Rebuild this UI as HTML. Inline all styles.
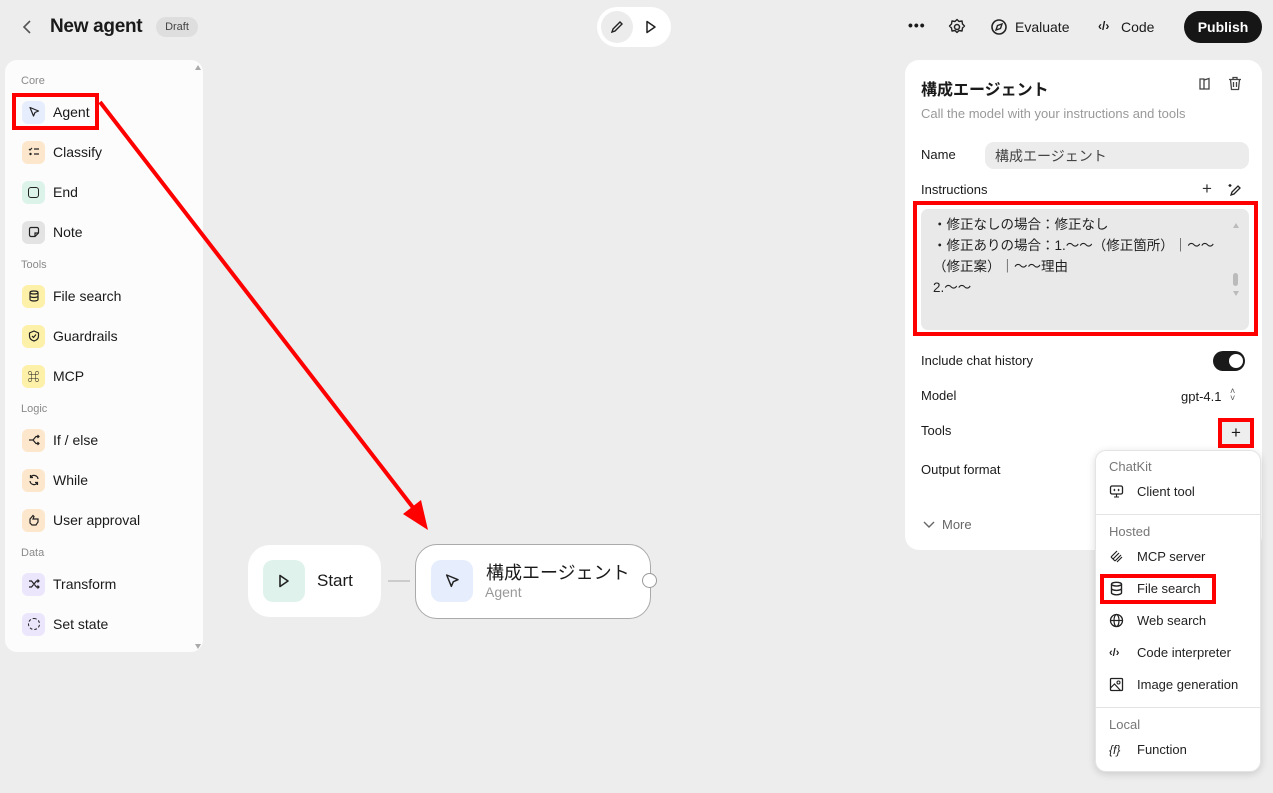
<!DOCTYPE html><html><head><meta charset="utf-8"><style>
*{box-sizing:border-box;margin:0;padding:0}
body{width:1273px;height:793px;background:#ededed;font-family:"Liberation Sans","Noto Sans CJK JP",sans-serif;color:#1a1a1a;position:relative;overflow:hidden}
.a{position:absolute}
.sec{position:absolute;left:21px;font-size:11px;color:#8a8a8a}
.it{position:absolute;left:22px;height:22px;display:flex;align-items:center;font-size:14px}
.ic{width:23px;height:23px;border-radius:6px;margin-right:8px;display:flex;align-items:center;justify-content:center}
.lbl{position:absolute;left:921px;font-size:14px}
.dd{position:absolute;left:1109px;font-size:13px;color:#222;display:flex;align-items:center}
.dd svg{margin-right:13px}
.dh{position:absolute;left:1109px;font-size:13px;color:#777}
svg{display:block}
</style></head><body>
<svg class="a" style="left:20px;top:19px" width="14" height="16" viewBox="0 0 14 16"><path d="M10 2L4 8l6 6" fill="none" stroke="#555" stroke-width="1.6"/></svg>
<div class="a" style="left:50px;top:16px;font-size:19px;font-weight:bold;letter-spacing:-0.3px">New agent</div>
<div class="a" style="left:156px;top:17px;width:42px;height:20px;border-radius:10px;background:#dedede;font-size:11px;color:#444;text-align:center;line-height:20px">Draft</div>
<div class="a" style="left:597px;top:7px;width:74px;height:40px;border-radius:20px;background:#fff"></div>
<div class="a" style="left:601px;top:11px;width:32px;height:32px;border-radius:16px;background:#ececec"></div>
<svg class="a" style="left:609px;top:19px" width="16" height="16" viewBox="0 0 16 16"><path d="M3 13l1-3 7-7 2 2-7 7z" fill="none" stroke="#222" stroke-width="1.4"/></svg>
<svg class="a" style="left:644px;top:19px" width="14" height="16" viewBox="0 0 14 16"><path d="M3 2.5v11l8-5.5z" fill="none" stroke="#222" stroke-width="1.5" stroke-linejoin="round"/></svg>
<div class="a" style="left:908px;top:17px;font-size:14px;font-weight:bold;letter-spacing:1px">•••</div>
<svg class="a" style="left:948px;top:18px" width="18" height="18" viewBox="0 0 18 18"><circle cx="9" cy="9" r="2.5" fill="none" stroke="#222" stroke-width="1.5"/><path d="M9 1.5l2 2 3-.5.5 3 2 2-2 2-.5 3-3-.5-2 2-2-2-3 .5-.5-3-2-2 2-2 .5-3 3 .5z" fill="none" stroke="#222" stroke-width="1.4" stroke-linejoin="round"/></svg>
<svg class="a" style="left:990px;top:18px" width="18" height="18" viewBox="0 0 18 18"><circle cx="9" cy="9" r="7" fill="none" stroke="#222" stroke-width="1.6"/><path d="M12 6l-1.5 4.5L6 12l1.5-4.5z" fill="none" stroke="#222" stroke-width="1.4"/></svg>
<div class="a" style="left:1015px;top:19px;font-size:14px">Evaluate</div>
<div class="a" style="left:1098px;top:19px;font-size:12px;font-weight:bold">‹/›</div>
<div class="a" style="left:1121px;top:19px;font-size:14px">Code</div>
<div class="a" style="left:1184px;top:11px;width:78px;height:32px;border-radius:16px;background:#161616;color:#fff;font-size:14px;font-weight:bold;text-align:center;line-height:32px">Publish</div>

<div class="a" style="left:5px;top:60px;width:198px;height:592px;border-radius:12px;background:#fcfcfc"></div>
<div class="a" style="left:195px;top:62px;width:0;height:0;border:3.5px solid transparent;border-bottom:5px solid #aaa"></div>
<div class="a" style="left:195px;top:644px;width:0;height:0;border:3.5px solid transparent;border-top:5px solid #aaa"></div>
<div class="sec" style="top:75px">Core</div>
<div class="sec" style="top:259px">Tools</div>
<div class="sec" style="top:403px">Logic</div>
<div class="sec" style="top:547px">Data</div>
<div class="it" style="top:101px"><div class="ic" style="background:#e6edfd"><svg width="12" height="12" viewBox="0 0 12 12"><path d="M2 1.5l8.5 3.5-3.5 1.5-1.5 3.5z" fill="none" stroke="#222" stroke-width="1.2" stroke-linejoin="round"/></svg></div>Agent</div>
<div class="it" style="top:141px"><div class="ic" style="background:#fde7cc"><svg width="12" height="12" viewBox="0 0 12 12"><path d="M1 3l1 1 2-2M6 3h5M6 8h5" stroke="#222" stroke-width="1.2" fill="none"/><circle cx="2.5" cy="8" r="1.2" fill="#222"/></svg></div>Classify</div>
<div class="it" style="top:181px"><div class="ic" style="background:#dcf3ea"><div style="width:11px;height:11px;border:1.4px solid #222;border-radius:3px"></div></div>End</div>
<div class="it" style="top:221px"><div class="ic" style="background:#e3e3e3"><svg width="12" height="12" viewBox="0 0 12 12"><path d="M1.5 3a1.5 1.5 0 011.5-1.5h6A1.5 1.5 0 0110.5 3v4L7 10.5H3A1.5 1.5 0 011.5 9zM7 10.5V7h3.5" fill="none" stroke="#222" stroke-width="1.2"/></svg></div>Note</div>
<div class="it" style="top:285px"><div class="ic" style="background:#fdf0a8"><svg width="12" height="12" viewBox="0 0 12 12"><ellipse cx="6" cy="2.5" rx="4" ry="1.5" fill="none" stroke="#222" stroke-width="1.2"/><path d="M2 2.5v7c0 .8 1.8 1.5 4 1.5s4-.7 4-1.5v-7M2 6c0 .8 1.8 1.5 4 1.5S10 6.8 10 6" fill="none" stroke="#222" stroke-width="1.2"/></svg></div>File search</div>
<div class="it" style="top:325px"><div class="ic" style="background:#fdf0a8"><svg width="12" height="12" viewBox="0 0 12 12"><path d="M6 1l4.5 2v3c0 2.5-2 4.3-4.5 5-2.5-.7-4.5-2.5-4.5-5V3z" fill="none" stroke="#222" stroke-width="1.2"/><path d="M4 6l1.5 1.5L8 4.5" fill="none" stroke="#222" stroke-width="1.2"/></svg></div>Guardrails</div>
<div class="it" style="top:365px"><div class="ic" style="background:#fdf0a8"><span style="font-size:12px">⌘</span></div>MCP</div>
<div class="it" style="top:429px"><div class="ic" style="background:#fde7cc"><svg width="12" height="12" viewBox="0 0 12 12"><path d="M1 6h4l3-3.5h3M5 6l3 3.5h3M9.5 1l1.5 1.5L9.5 4M9.5 8l1.5 1.5L9.5 11" fill="none" stroke="#222" stroke-width="1.2"/></svg></div>If / else</div>
<div class="it" style="top:469px"><div class="ic" style="background:#fde7cc"><svg width="12" height="12" viewBox="0 0 12 12"><path d="M10 5a4 4 0 00-7.5-1.5M2 7a4 4 0 007.5 1.5M2.5 1v2.5H5M9.5 11V8.5H7" fill="none" stroke="#222" stroke-width="1.2"/></svg></div>While</div>
<div class="it" style="top:509px"><div class="ic" style="background:#fde7cc"><svg width="12" height="12" viewBox="0 0 12 12"><path d="M2 5l3-3.5 1 1L5 5h5v3l-2 3H4L2 9z" fill="none" stroke="#222" stroke-width="1.2"/></svg></div>User approval</div>
<div class="it" style="top:573px"><div class="ic" style="background:#ece6fd"><svg width="12" height="12" viewBox="0 0 12 12"><path d="M1 3h2.5l5 6H11M1 9h2.5l5-6H11M9.5 1.5L11 3 9.5 4.5M9.5 7.5L11 9l-1.5 1.5" fill="none" stroke="#222" stroke-width="1.2"/></svg></div>Transform</div>
<div class="it" style="top:613px"><div class="ic" style="background:#ece6fd"><div style="width:12px;height:12px;border:1.4px dashed #222;border-radius:50%"></div></div>Set state</div>
<div class="a" style="left:12px;top:93px;width:87px;height:37px;border:4px solid #f00"></div>

<div class="a" style="left:248px;top:545px;width:133px;height:72px;border-radius:22px;background:#fff"></div>
<div class="a" style="left:263px;top:560px;width:42px;height:42px;border-radius:10px;background:#dff3ec"></div>
<svg class="a" style="left:277px;top:573px" width="14" height="16" viewBox="0 0 14 16"><path d="M3 2.5v11l8-5.5z" fill="none" stroke="#222" stroke-width="1.6" stroke-linejoin="round"/></svg>
<div class="a" style="left:317px;top:571px;font-size:17px">Start</div>
<div class="a" style="left:388px;top:580px;width:22px;height:2px;background:#ccc"></div>
<div class="a" style="left:415px;top:544px;width:236px;height:75px;border-radius:22px;background:#fff;border:1.5px solid #aaa"></div>
<div class="a" style="left:431px;top:560px;width:42px;height:42px;border-radius:10px;background:#e6edfd"></div>
<svg class="a" style="left:444px;top:573px" width="16" height="16" viewBox="0 0 12 12"><path d="M2 1.5l8.5 3.5-3.5 1.5-1.5 3.5z" fill="none" stroke="#222" stroke-width="1.1" stroke-linejoin="round"/></svg>
<div class="a" style="left:486px;top:559px;font-size:18px">構成エージェント</div>
<div class="a" style="left:485px;top:584px;font-size:14px;color:#999">Agent</div>
<div class="a" style="left:642px;top:573px;width:15px;height:15px;border-radius:50%;background:#fff;border:1.5px solid #999"></div>

<svg class="a" style="left:0;top:0" width="1273" height="793"><line x1="100" y1="102" x2="418" y2="514" stroke="#f00" stroke-width="4"/><path d="M428 530L403 514l18-14z" fill="#f00"/></svg>

<div class="a" style="left:905px;top:60px;width:357px;height:490px;border-radius:14px;background:#fff"></div>
<div class="a" style="left:921px;top:76px;font-size:16px;font-weight:bold">構成エージェント</div>
<svg class="a" style="left:1198px;top:77px" width="14" height="14" viewBox="0 0 14 14"><path d="M2 2h4v10H2zM6 3l5-1.5V12L6 12" fill="none" stroke="#444" stroke-width="1.3"/></svg>
<svg class="a" style="left:1228px;top:76px" width="14" height="15" viewBox="0 0 14 15"><path d="M1 3.5h12M5 3.5V1.5h4v2M2.5 3.5l1 10h7l1-10M5.5 6v5M8.5 6v5" fill="none" stroke="#444" stroke-width="1.3"/></svg>
<div class="a" style="left:921px;top:106px;font-size:13px;color:#999">Call the model with your instructions and tools</div>
<div class="lbl" style="top:147px;font-size:13px">Name</div>
<div class="a" style="left:985px;top:142px;width:264px;height:27px;border-radius:9px;background:#ececec;font-size:14px;color:#444;padding:6px 10px;line-height:16px">構成エージェント</div>
<div class="lbl" style="top:182px;font-size:13px">Instructions</div>
<div class="a" style="left:1202px;top:179px;font-size:17px;color:#333">+</div>
<svg class="a" style="left:1228px;top:183px" width="14" height="14" viewBox="0 0 14 14"><path d="M3 12l1-3 6-6 2 2-6 6zM2 1v3M.5 2.5h3" fill="none" stroke="#222" stroke-width="1.3"/></svg>
<div class="a" style="left:921px;top:209px;width:328px;height:121px;border-radius:7px;background:#e9e9e9;font-size:13.5px;color:#222;line-height:21px;padding:4px 12px 0 12px;padding-top:5px"><div>・修正なしの場合：修正なし</div><div>・修正ありの場合：1.〜〜（修正箇所）｜〜〜</div><div>（修正案）｜〜〜理由</div><div>2.〜〜</div></div>
<div class="a" style="left:1233px;top:220px;width:0;height:0;border:3.5px solid transparent;border-bottom:5px solid #bbb"></div>
<div class="a" style="left:1233px;top:273px;width:5px;height:13px;border-radius:3px;background:#bbb"></div>
<div class="a" style="left:1233px;top:291px;width:0;height:0;border:3.5px solid transparent;border-top:5px solid #bbb"></div>
<div class="a" style="left:913px;top:201px;width:345px;height:135px;border:4px solid #f00"></div>
<div class="lbl" style="top:353px;font-size:13px">Include chat history</div>
<div class="a" style="left:1213px;top:351px;width:32px;height:20px;border-radius:10px;background:#1a1a1a"></div>
<div class="a" style="left:1229px;top:354px;width:14px;height:14px;border-radius:50%;background:#fff"></div>
<div class="lbl" style="top:388px;font-size:13px">Model</div>
<div class="a" style="left:1181px;top:389px;font-size:13px">gpt-4.1</div>
<div class="a" style="left:1230px;top:388px;font-size:9px;line-height:7px;color:#555">˄<br>˅</div>
<div class="lbl" style="top:423px;font-size:13px">Tools</div>
<div class="a" style="left:1218px;top:418px;width:36px;height:30px;border:4px solid #f00;background:#eee;text-align:center;font-size:17px;line-height:21px">+</div>
<div class="lbl" style="top:462px;font-size:13px">Output format</div>
<svg class="a" style="left:922px;top:519px" width="14" height="12" viewBox="0 0 14 12"><path d="M2 3l5 5 5-5" fill="none" stroke="#666" stroke-width="1.4"/></svg>
<div class="a" style="left:942px;top:517px;font-size:13px;color:#666">More</div>

<div class="a" style="left:1095px;top:450px;width:166px;height:322px;border-radius:11px;background:#fff;box-shadow:0 2px 8px rgba(0,0,0,.15);border:1px solid #e4e4e4"></div>
<div class="dh" style="top:459px">ChatKit</div>
<div class="dd" style="top:484px"><svg width="15" height="15" viewBox="0 0 15 15"><rect x="1.5" y="2" width="12" height="8" rx="1.5" fill="none" stroke="#222" stroke-width="1.3"/><path d="M5 13h5M7.5 10v3M6 5l-1 1 1 1M9 5l1 1-1 1" fill="none" stroke="#222" stroke-width="1.1"/></svg>Client tool</div>
<div class="a" style="left:1096px;top:514px;width:164px;height:1px;background:#e4e4e4"></div>
<div class="dh" style="top:524px">Hosted</div>
<div class="dd" style="top:549px"><svg width="15" height="15" viewBox="0 0 15 15"><path d="M2 8l6-6M4 10l6-6M6 12l6-6M8 13l5-5M2 8l4 4" fill="none" stroke="#222" stroke-width="1.2"/></svg>MCP server</div>
<div class="dd" style="top:581px"><svg width="15" height="15" viewBox="0 0 12 12"><ellipse cx="6" cy="2.5" rx="4" ry="1.5" fill="none" stroke="#222" stroke-width="1.1"/><path d="M2 2.5v7c0 .8 1.8 1.5 4 1.5s4-.7 4-1.5v-7M2 6c0 .8 1.8 1.5 4 1.5S10 6.8 10 6" fill="none" stroke="#222" stroke-width="1.1"/></svg>File search</div>
<div class="a" style="left:1100px;top:574px;width:116px;height:30px;border:4px solid #f00"></div>
<div class="dd" style="top:613px"><svg width="15" height="15" viewBox="0 0 15 15"><circle cx="7.5" cy="7.5" r="6" fill="none" stroke="#222" stroke-width="1.3"/><ellipse cx="7.5" cy="7.5" rx="2.5" ry="6" fill="none" stroke="#222" stroke-width="1.2"/><path d="M1.5 7.5h12" stroke="#222" stroke-width="1.2"/></svg>Web search</div>
<div class="dd" style="top:645px"><span style="font-size:11px;font-weight:bold;width:15px;margin-right:13px">‹/›</span>Code interpreter</div>
<div class="dd" style="top:677px"><svg width="15" height="15" viewBox="0 0 15 15"><rect x="1.5" y="1.5" width="12" height="12" rx="1" fill="none" stroke="#222" stroke-width="1.3"/><circle cx="9.5" cy="5.5" r="1.5" fill="none" stroke="#222" stroke-width="1.1"/><path d="M1.5 11l4-4 6 6.5" fill="none" stroke="#222" stroke-width="1.2"/></svg>Image generation</div>
<div class="a" style="left:1096px;top:707px;width:164px;height:1px;background:#e4e4e4"></div>
<div class="dh" style="top:717px">Local</div>
<div class="dd" style="top:742px"><span style="font-size:12px;width:15px;margin-right:13px;font-style:italic">{f}</span>Function</div>
</body></html>
